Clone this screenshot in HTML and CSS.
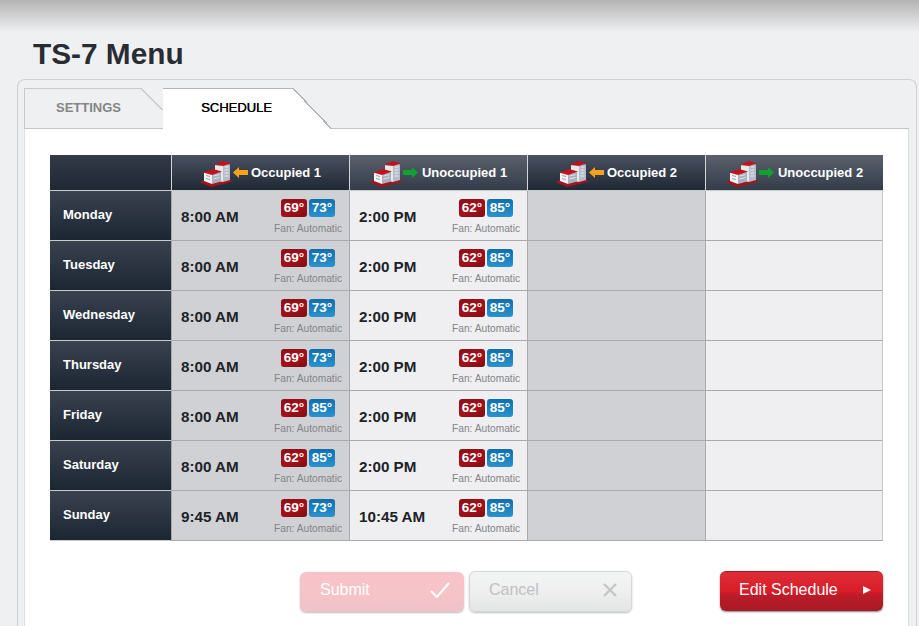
FILE: index.html
```html
<!DOCTYPE html>
<html lang="en">
<head>
<meta charset="utf-8">
<title>TS-7 Menu</title>
<link rel="stylesheet" href="styles.css">
</head>
<body>
<svg class="defs" width="0" height="0" aria-hidden="true">
  <defs>
    <symbol id="bldg" viewBox="0 0 33 27">
      <path d="M0 22 L8 18 L26 18 L33 21.500 L11 27Z" fill="#a8141d"/>
      <path d="M15 5 L23 3 L23 22 L15 20Z" fill="#e6e8ec"/>
      <path d="M23 3 L30 4.500 L30 20 L23 22Z" fill="#b4bbc9"/>
      <path d="M24.500 7 h4 M24.500 10 h4 M24.500 13 h4 M24.500 16 h4" stroke="#e8ebf0" stroke-width="1.200"/>
      <path d="M14 5 L23 1 L31 3.500 L23 6Z" fill="#c4121d"/>
      <path d="M4 12 L12 14 L12 24 L4 21Z" fill="#f2f3f5"/>
      <path d="M12 14 L21 11.500 L21 21.500 L12 24Z" fill="#a9b0bf"/>
      <path d="M6 15.500 l4 1 M6 18.500 l4 1" stroke="#9aa1b0" stroke-width="1"/>
      <path d="M13.500 16 l6 -1.500 M13.500 19 l6 -1.500" stroke="#dfe2e8" stroke-width="1"/>
      <path d="M3 12.500 L13 9 L22 11.500 L12 15Z" fill="#c4121d"/>
    </symbol>
    <symbol id="arrow" viewBox="0 0 15 11">
      <path d="M0 5.500 L6 0 V3 H15 V8 H6 V11Z"/>
    </symbol>
  </defs>
</svg>
<div class="topbar"></div>
<h1 class="title">TS-7 Menu</h1>
<main class="panel">
  <nav class="tabs">
    <a class="tab tab-off">SETTINGS</a>
    <a class="tab tab-on">SCHEDULE</a>
  </nav>
  <section class="content">
    <div class="sched">
      <div class="hd hd-blank"></div>
      <div class="hd"><svg class="bldg"><use href="#bldg"/></svg><svg class="arr arr-in"><use href="#arrow"/></svg><span>Occupied 1</span></div>
      <div class="hd hd-light"><svg class="bldg"><use href="#bldg"/></svg><svg class="arr arr-out"><use href="#arrow"/></svg><span>Unoccupied 1</span></div>
      <div class="hd"><svg class="bldg"><use href="#bldg"/></svg><svg class="arr arr-in"><use href="#arrow"/></svg><span>Occupied 2</span></div>
      <div class="hd hd-light"><svg class="bldg"><use href="#bldg"/></svg><svg class="arr arr-out"><use href="#arrow"/></svg><span>Unoccupied 2</span></div>

      <div class="day">Monday</div>
      <div class="cell dark"><span class="time">8:00 AM</span><div class="set"><div class="temps"><b class="heat">69°</b><b class="cool">73°</b></div><small>Fan: Automatic</small></div></div>
      <div class="cell"><span class="time">2:00 PM</span><div class="set"><div class="temps"><b class="heat">62°</b><b class="cool">85°</b></div><small>Fan: Automatic</small></div></div>
      <div class="cell dark"></div><div class="cell"></div>

      <div class="day">Tuesday</div>
      <div class="cell dark"><span class="time">8:00 AM</span><div class="set"><div class="temps"><b class="heat">69°</b><b class="cool">73°</b></div><small>Fan: Automatic</small></div></div>
      <div class="cell"><span class="time">2:00 PM</span><div class="set"><div class="temps"><b class="heat">62°</b><b class="cool">85°</b></div><small>Fan: Automatic</small></div></div>
      <div class="cell dark"></div><div class="cell"></div>

      <div class="day">Wednesday</div>
      <div class="cell dark"><span class="time">8:00 AM</span><div class="set"><div class="temps"><b class="heat">69°</b><b class="cool">73°</b></div><small>Fan: Automatic</small></div></div>
      <div class="cell"><span class="time">2:00 PM</span><div class="set"><div class="temps"><b class="heat">62°</b><b class="cool">85°</b></div><small>Fan: Automatic</small></div></div>
      <div class="cell dark"></div><div class="cell"></div>

      <div class="day">Thursday</div>
      <div class="cell dark"><span class="time">8:00 AM</span><div class="set"><div class="temps"><b class="heat">69°</b><b class="cool">73°</b></div><small>Fan: Automatic</small></div></div>
      <div class="cell"><span class="time">2:00 PM</span><div class="set"><div class="temps"><b class="heat">62°</b><b class="cool">85°</b></div><small>Fan: Automatic</small></div></div>
      <div class="cell dark"></div><div class="cell"></div>

      <div class="day">Friday</div>
      <div class="cell dark"><span class="time">8:00 AM</span><div class="set"><div class="temps"><b class="heat">62°</b><b class="cool">85°</b></div><small>Fan: Automatic</small></div></div>
      <div class="cell"><span class="time">2:00 PM</span><div class="set"><div class="temps"><b class="heat">62°</b><b class="cool">85°</b></div><small>Fan: Automatic</small></div></div>
      <div class="cell dark"></div><div class="cell"></div>

      <div class="day">Saturday</div>
      <div class="cell dark"><span class="time">8:00 AM</span><div class="set"><div class="temps"><b class="heat">62°</b><b class="cool">85°</b></div><small>Fan: Automatic</small></div></div>
      <div class="cell"><span class="time">2:00 PM</span><div class="set"><div class="temps"><b class="heat">62°</b><b class="cool">85°</b></div><small>Fan: Automatic</small></div></div>
      <div class="cell dark"></div><div class="cell"></div>

      <div class="day">Sunday</div>
      <div class="cell dark"><span class="time">9:45 AM</span><div class="set"><div class="temps"><b class="heat">69°</b><b class="cool">73°</b></div><small>Fan: Automatic</small></div></div>
      <div class="cell"><span class="time">10:45 AM</span><div class="set"><div class="temps"><b class="heat">62°</b><b class="cool">85°</b></div><small>Fan: Automatic</small></div></div>
      <div class="cell dark"></div><div class="cell"></div>
    </div>
    <div class="actions">
      <button class="btn btn-submit">Submit<svg class="ico" viewBox="0 0 20 16"><path d="M1 9 L7 15 L19 1" fill="none" stroke="#fff" stroke-width="2"/></svg></button>
      <button class="btn btn-cancel">Cancel<svg class="ico ico-x" viewBox="0 0 14 14"><path d="M1 1 L13 13 M13 1 L1 13" fill="none" stroke="#c4c6c8" stroke-width="2.400"/></svg></button>
      <button class="btn btn-edit">Edit Schedule<svg class="ico-play" viewBox="0 0 8 8"><path d="M0 0 L8 4 L0 8Z" fill="#fff"/></svg></button>
    </div>
  </section>
</main>
</body>
</html>
```
FILE: styles.css
```css
* { box-sizing: border-box; }
html, body { margin: 0; height: 626px; overflow: hidden; }
body {
  background: #eff0f2;
  font-family: "Liberation Sans", Arial, sans-serif;
  color: #2a2c33;
}
.defs { position: absolute; }
.topbar {
  height: 32px;
  background: linear-gradient(#b3b3b3, #eff0f2);
}
.title {
  margin: 0;
  padding: 4px 0 0 33px;
  height: 47px;
  font-size: 29.800px;
  line-height: 36px;
  font-weight: bold;
}
.panel {
  margin: 0 2px 0 17px;
  height: 560px;
  padding: 8px 7px 0 6px;
  background: #eff0f2;
  border: 1px solid #cfd0d3;
  border-bottom: 0;
  border-radius: 8px 8px 0 0;
}
.tabs {
  display: flex;
  height: 41px;
  position: relative;
  z-index: 1;
  border-bottom: 1px solid #c4c5c8;
}
.tab {
  display: block;
  position: relative;
  font-size: 13px;
  font-weight: bold;
  text-align: center;
}
.tab-off {
  width: 139px;
  height: 40px;
  padding-right: 11px;
  color: #858585;
  background: #eff0f2;
  border-top: 1px solid #c9cacc;
  border-left: 1px solid #c9cacc;
  line-height: 38px;
}
.tab-off::after {
  content: "";
  position: absolute;
  top: -1px;
  right: 0;
  width: 22px;
  height: 22px;
  background: linear-gradient(to top right, #eff0f2 calc(50% - 1px), #c9cacc calc(50% - 1px), #c9cacc calc(50% + 0.500px), #eff0f2 calc(50% + 0.500px));
}
.tab-on {
  width: 169px;
  height: 41px;
  padding-right: 22px;
  color: #000;
  font-weight: normal;
  background: #fff;
  border-top: 1px solid #b5b5b8;
  line-height: 38px;
  text-shadow: 0.3px 0 0 #000;
  border-image: linear-gradient(to right, #b5b5b8 130px, transparent 130px) 1;
}
.tab-on::after {
  content: "";
  position: absolute;
  top: -1px;
  right: 0;
  width: 39px;
  height: 41px;
  background: linear-gradient(to top right, #fff calc(50% - 1px), #b5b5b8 calc(50% - 1px), #b5b5b8 calc(50% + 0.500px), #eff0f2 calc(50% + 0.500px));
}
.content {
  height: 510px;
  padding: 26px 26px 0 25px;
  background: #fff;
  border-left: 1px solid #dcdde0;
  border-right: 1px solid #dcdde0;
}
.sched {
  display: grid;
  grid-template-columns: 121px 178px 178px 178px 178px;
  grid-template-rows: 36px repeat(7, 50px);
  width: 833px;
}
.hd {
  display: flex;
  align-items: center;
  justify-content: center;
  font-size: 13px;
  font-weight: bold;
  color: #fff;
  background: linear-gradient(#4a5160, #1f2835);
  border-left: 1px solid #d4d5d8;
  border-bottom: 1px solid #c9cacc;
}
.hd-light { background: linear-gradient(#5b616d, #333c49); }
.hd-blank { border-left: 0; background: linear-gradient(#343a47, #1f2835); }
.bldg { width: 33px; height: 27px; margin-top: 2px; }
.arr { width: 15px; height: 11px; margin-right: 3px; }
.arr-in { fill: #f6a21d; }
.arr-out { fill: #12a02e; transform: scaleX(-1); margin-right: 4px; }
.day {
  display: flex;
  align-items: center;
  padding: 0 0 3px 13px;
  font-size: 13px;
  font-weight: bold;
  color: #fff;
  background: linear-gradient(#3a414f, #1c2633);
  border-bottom: 1px solid #c9cacc;
}
.cell {
  display: flex;
  align-items: center;
  justify-content: space-between;
  padding: 0 7px 0 9px;
  background: #efeff1;
  border-left: 1px solid #a9aaad;
  border-bottom: 1px solid #a9aaad;
}
.cell:nth-child(5n) { border-right: 1px solid #c6c7ca; }
.dark { background: #d0d1d4; }
.time {
  margin-top: 2px;
  font-size: 15.200px;
  font-weight: bold;
  color: #202228;
}
.set {
  display: flex;
  flex-direction: column;
  align-items: center;
  padding-top: 2px;
}
.temps { display: flex; gap: 2px; }
.temps b {
  display: block;
  width: 26px;
  height: 18px;
  border-radius: 3px;
  font-size: 13.500px;
  line-height: 17px;
  font-weight: bold;
  text-align: center;
  color: #fff;
}
.heat { background: linear-gradient(160deg, #8e0f16, #a4101a 60%, #7c0d13); }
.cool { background: linear-gradient(#0f6fae, #2a93cf); }
small {
  display: block;
  margin-top: 6px;
  font-size: 10.200px;
  line-height: 12px;
  color: #838488;
}
.actions {
  display: flex;
  align-items: flex-start;
  padding: 31px 0 0 250px;
  width: 833px;
}
.btn {
  display: flex;
  align-items: center;
  justify-content: space-between;
  height: 40px;
  padding: 0 14px 4px 20px;
  border-radius: 6px;
  font-family: inherit;
  font-size: 16px;
  border: 0;
}
.btn-submit {
  width: 164px;
  color: #fff;
  background: linear-gradient(#f8c3c8, #f6c4c8 50%, #edc2c8);
  box-shadow: 0 1px 2px #bdbdbd;
}
.btn-cancel {
  width: 163px;
  height: 41px;
  margin: -1px 0 0 5px;
  padding-left: 19px;
  color: #bfc1c3;
  background: linear-gradient(#f3f4f4, #efefef 50%, #e3e4e4);
  border: 1px solid #d6d7d8;
  box-shadow: 0 1px 2px #bdbdbd;
}
.btn-edit {
  width: 163px;
  margin: -1px 0 0 88px;
  padding: 0 12px 4px 19px;
  color: #fff;
  background: linear-gradient(#df2e38, #d81c28 50%, #bc1c28 60%, #a71a26);
  border-top: 1px solid #9c1a24;
  box-shadow: 0 1px 2px #808080;
}
.ico { width: 20px; height: 16px; }
.ico-x { width: 14px; height: 14px; }
.ico-play { width: 8px; height: 8px; }
```
